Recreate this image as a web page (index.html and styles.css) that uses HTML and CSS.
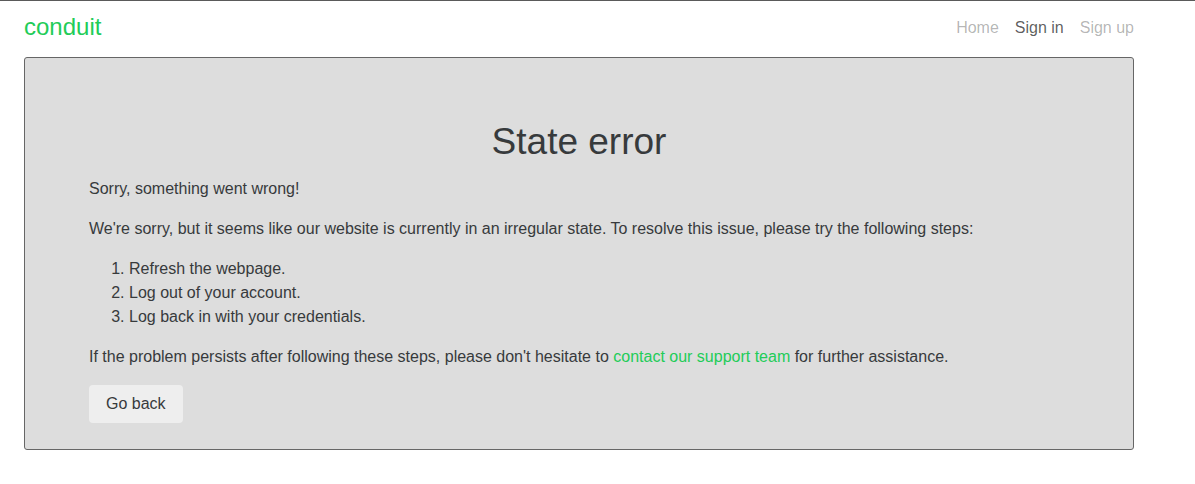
FILE: index.html
```html
<!DOCTYPE html>
<html>
<head>
<meta charset="utf-8">
<link rel="stylesheet" href="styles.css">
</head>
<body>
<nav class="navbar">
  <div class="container nav-inner">
    <a class="brand" href="#">conduit</a>
    <ul class="nav">
      <li><a class="nav-link" href="#">Home</a></li>
      <li><a class="nav-link active" href="#">Sign in</a></li>
      <li><a class="nav-link" href="#">Sign up</a></li>
    </ul>
  </div>
</nav>
<main class="container">
  <div class="error-box">
    <h1 class="title">State error</h1>
    <p>Sorry, something went wrong!</p>
    <p>We're sorry, but it seems like our website is currently in an irregular state. To resolve this issue, please try the following steps:</p>
    <ol class="steps">
      <li>Refresh the webpage.</li>
      <li>Log out of your account.</li>
      <li>Log back in with your credentials.</li>
    </ol>
    <p>If the problem persists after following these steps, please don't hesitate to <a class="link" href="#">contact our support team</a> for further assistance.</p>
    <button class="btn">Go back</button>
  </div>
</main>
</body>
</html>
```
FILE: styles.css
```css
html, body {
  margin: 0;
  padding: 0;
}
body {
  font-family: "Liberation Sans", Arial, sans-serif;
  font-size: 16px;
  line-height: 24px;
  color: #373a3c;
  background: #fff;
  border-top: 1px solid #5a5a5a;
}
.container {
  width: 1110px;
  margin-left: 24px;
}
.navbar {
  padding: 8px 0;
}
.nav-inner {
  display: flex;
  justify-content: space-between;
  align-items: center;
  height: 40px;
}
.brand {
  font-size: 24px;
  line-height: 28px;
  color: #22cc58;
  text-decoration: none;
  margin-top: -4px;
}
.nav {
  list-style: none;
  margin: -2px 0 0;
  padding: 0;
  display: flex;
  gap: 16px;
}
.nav-link {
  color: rgba(0,0,0,0.3);
  text-decoration: none;
}
.nav-link.active {
  color: rgba(0,0,0,0.65);
}
.error-box {
  background: #dddddd;
  border: 1px solid #666;
  border-radius: 3px;
  padding: 46px 64px 26px;
}
.title {
  font-size: 37px;
  font-weight: 400;
  line-height: 40px;
  text-align: center;
  margin: 18px 0 15px;
}
p {
  margin: 0 0 16px;
}
.steps {
  margin: 0 0 16px;
  padding-left: 40px;
}
.link {
  color: #22cc58;
  text-decoration: none;
}
.btn {
  font-family: "Liberation Sans", Arial, sans-serif;
  font-size: 16px;
  line-height: 24px;
  color: #373a3c;
  background: #eeeeee;
  border: none;
  border-radius: 4px;
  padding: 7px 17px 7px;
  margin-top: 0;
}
```
